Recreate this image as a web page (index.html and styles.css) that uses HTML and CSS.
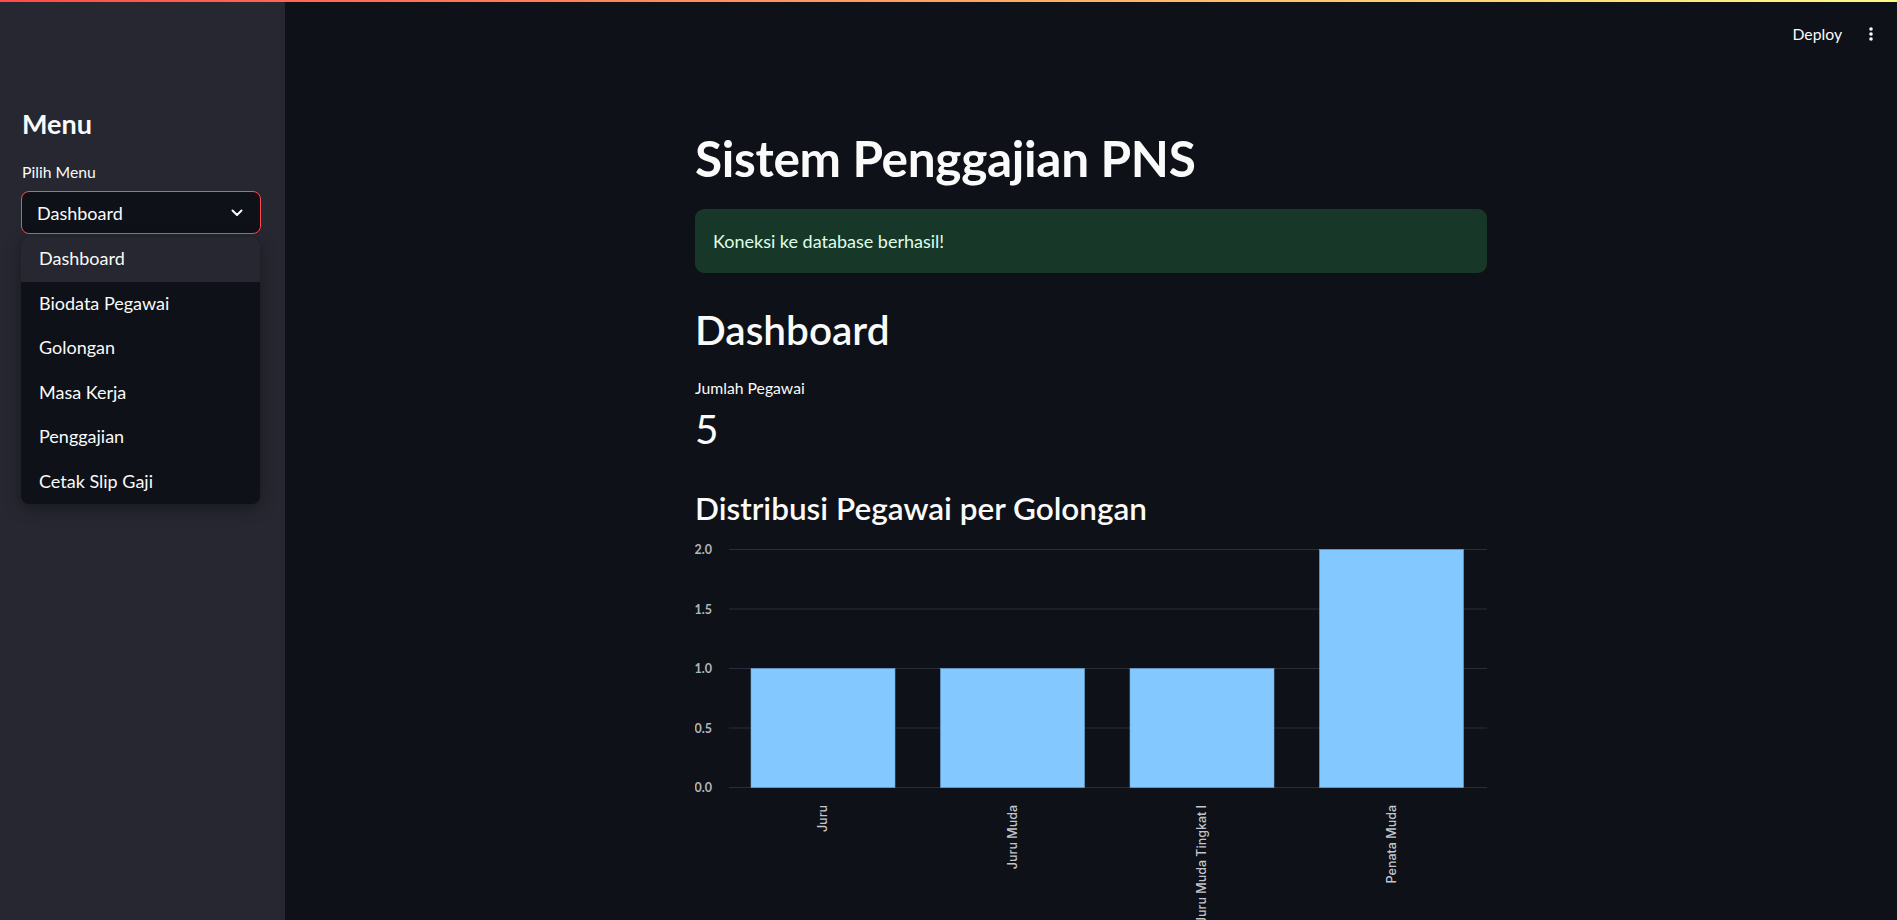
FILE: index.html
```html
<!DOCTYPE html>
<html lang="id">
<head>
<meta charset="utf-8">
<title>Sistem Penggajian PNS</title>
<link rel="stylesheet" href="styles.css">
</head>
<body>
<div class="decoration"></div>
<div class="app">
  <aside class="sidebar">
    <h2 class="side-title">Menu</h2>
    <div class="side-label">Pilih Menu</div>
    <div class="select-wrap">
      <div class="select">
        <span>Dashboard</span>
        <svg class="chev" width="12" height="8" viewBox="0 0 12 8"><path d="M1.5 1.5 L6 6 L10.5 1.5" fill="none" stroke="#fafafa" stroke-width="2" stroke-linecap="round" stroke-linejoin="round"/></svg>
      </div>
      <ul class="dropdown">
        <li class="item active">Dashboard</li>
        <li class="item">Biodata Pegawai</li>
        <li class="item">Golongan</li>
        <li class="item">Masa Kerja</li>
        <li class="item">Penggajian</li>
        <li class="item">Cetak Slip Gaji</li>
      </ul>
    </div>
  </aside>
  <main class="main">
    <header class="topbar">
      <span class="deploy">Deploy</span>
      <svg class="kebab" width="4" height="14" viewBox="0 0 4 14"><circle cx="2" cy="2" r="1.8" fill="#fafafa"/><circle cx="2" cy="7" r="1.8" fill="#fafafa"/><circle cx="2" cy="12" r="1.8" fill="#fafafa"/></svg>
    </header>
    <section class="block">
      <h1 class="title">Sistem Penggajian PNS</h1>
      <div class="success">Koneksi ke database berhasil!</div>
      <h2 class="h2">Dashboard</h2>
      <div class="metric-label">Jumlah Pegawai</div>
      <div class="metric-value">5</div>
      <h3 class="h3">Distribusi Pegawai per Golongan</h3>
      <svg class="chart" width="792" height="400" viewBox="0 0 792 400">
        <g class="grid" stroke="#2b2e38" stroke-width="1">
          <line x1="34" y1="14.5" x2="792" y2="14.5"/>
          <line x1="34" y1="74" x2="792" y2="74"/>
          <line x1="34" y1="133.5" x2="792" y2="133.5"/>
          <line x1="34" y1="193" x2="792" y2="193"/>
          <line x1="34" y1="252.5" x2="792" y2="252.5"/>
        </g>
        <g class="ylabels" fill="#b3b5be" font-size="12.5" font-weight="700" text-anchor="end">
          <text x="17" y="19">2.0</text>
          <text x="17" y="78.5">1.5</text>
          <text x="17" y="138">1.0</text>
          <text x="17" y="197.5">0.5</text>
          <text x="17" y="257">0.0</text>
        </g>
        <g class="bars" fill="#83c9ff" stroke="#6aa8d8" stroke-width="0.6">
          <rect x="56" y="133.5" width="144" height="119"/>
          <rect x="245.5" y="133.5" width="144" height="119"/>
          <rect x="435" y="133.5" width="144" height="119"/>
          <rect x="624.5" y="14.5" width="144" height="238"/>
        </g>
        <g class="xlabels" fill="#c3c5cd" font-size="12.5" font-weight="500" text-anchor="end">
          <text transform="translate(132,270) rotate(-90)">Juru</text>
          <text transform="translate(321.5,270) rotate(-90)">Juru Muda</text>
          <text transform="translate(511,270) rotate(-90)">Juru Muda Tingkat I</text>
          <text transform="translate(700.5,270) rotate(-90)">Penata Muda</text>
        </g>
      </svg>
    </section>
  </main>
</div>
</body>
</html>
```
FILE: styles.css
```css
* { box-sizing: border-box; }
html, body {
  margin: 0;
  padding: 0;
  height: 100%;
  overflow: hidden;
  background: #0e1117;
  color: #fafafa;
  font-family: "Source Sans Pro", Lato, "Noto Sans", sans-serif;
}
.decoration {
  position: absolute;
  top: 0;
  left: 0;
  right: 0;
  height: 2px;
  background: linear-gradient(90deg, #ff4b4b, #fffd80);
  z-index: 10;
}
.app {
  display: flex;
  height: 100vh;
}
.sidebar {
  width: 285px;
  flex: 0 0 285px;
  background: #262730;
  padding: 108px 24px 0 21px;
}
.side-title {
  margin: 0;
  font-size: 27px;
  line-height: 32.4px;
  font-weight: 700;
  padding-left: 1px;
}
.side-label {
  margin-top: 23px;
  font-size: 15.75px;
  line-height: 18.9px;
  padding-left: 1px;
}
.select-wrap {
  position: relative;
  margin-top: 9px;
}
.select {
  height: 43px;
  border: 1px solid #ff4b4b;
  border-radius: 8px;
  background: #0e1117;
  display: flex;
  align-items: center;
  justify-content: space-between;
  padding: 0 17px 0 15px;
  font-size: 18px;
}
.chev { display: block; margin-top: 1px; }
.dropdown {
  position: absolute;
  top: 46px;
  left: 0;
  width: 239px;
  margin: 0;
  padding: 0;
  list-style: none;
  background: #0e1117;
  border-radius: 8px;
  overflow: hidden;
  box-shadow: 0 4px 16px rgba(0, 0, 0, 0.35);
}
.item {
  height: 44.5px;
  line-height: 42px;
  padding: 0 0 2.5px 18px;
  font-size: 18px;
  color: #fafafa;
}
.item.active { background: #262730; }
.main {
  flex: 1;
  display: flex;
  flex-direction: column;
  min-width: 0;
}
.topbar {
  height: 68px;
  flex: 0 0 68px;
  display: flex;
  justify-content: flex-end;
  align-items: flex-start;
  padding: 25px 24px 0 0;
  gap: 27px;
}
.deploy {
  font-size: 15.75px;
  line-height: 18.9px;
}
.kebab { margin-top: 2px; display: block; }
.block {
  width: 792px;
  flex: 0 0 auto;
  margin: 0 auto;
  padding-top: 61px;
}
.title {
  margin: 0;
  font-size: 49.5px;
  line-height: 59.4px;
  font-weight: 700;
  letter-spacing: -0.3px;
}
.success {
  margin-top: 21px;
  height: 64px;
  padding: 18px;
  line-height: 28px;
  font-size: 18px;
  background: #173828;
  color: #dffde9;
  border-radius: 9px;
}
.h2 {
  margin: 33px 0 0;
  font-size: 40.5px;
  line-height: 48.6px;
  font-weight: 600;
}
.metric-label {
  margin-top: 24px;
  font-size: 15.75px;
  line-height: 18.9px;
}
.metric-value {
  margin-top: 7px;
  font-size: 40.5px;
  line-height: 48.6px;
}
.h3 {
  margin: 36px 0 0;
  font-size: 31.5px;
  line-height: 37.8px;
  font-weight: 600;
}
.chart {
  display: block;
  margin-top: 8px;
  font-family: Lato, sans-serif;
}
.xlabels { font-family: Inter, sans-serif; }
```
